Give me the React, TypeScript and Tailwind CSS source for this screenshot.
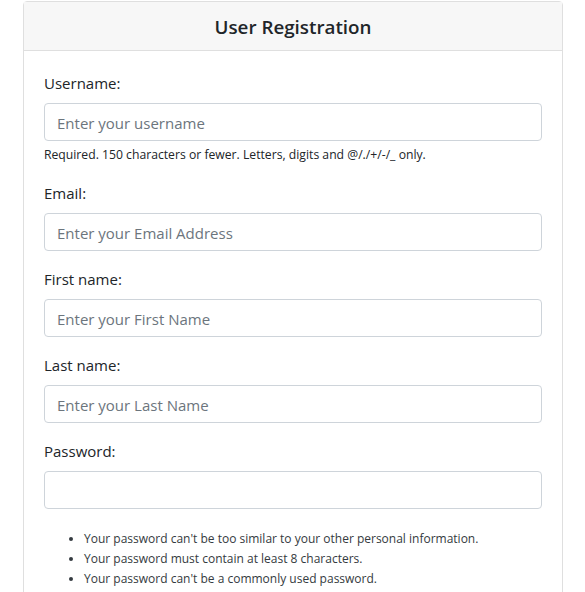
const fields = [
  { id: "username", label: "Username:", placeholder: "Enter your username", help: "Required. 150 characters or fewer. Letters, digits and @/./+/-/_ only." },
  { id: "email", label: "Email:", placeholder: "Enter your Email Address" },
  { id: "first_name", label: "First name:", placeholder: "Enter your First Name" },
  { id: "last_name", label: "Last name:", placeholder: "Enter your Last Name" },
];

const passwordRules = [
  "Your password can't be too similar to your other personal information.",
  "Your password must contain at least 8 characters.",
  "Your password can't be a commonly used password.",
];

export default function App() {
  return (
    <div className="min-h-[592px] bg-white pt-[1px] font-['Open_Sans',sans-serif] text-[#212529]">
      <div className="ml-[23px] w-[540px] rounded-t-[4px] border border-[#dfdfdf]">
        <div className="h-[49px] pt-[3px] border-b border-[#dfdfdf] bg-[#f7f7f7] flex items-center justify-center">
          <h4 className="text-[18.8px] font-semibold leading-none">User Registration</h4>
        </div>
        <form className="p-5">
          {fields.map((f) => (
            <div key={f.id} className="mb-4">
              <label htmlFor={f.id} className="block mb-2 text-[15px] leading-6">
                {f.label}
              </label>
              <input
                id={f.id}
                type="text"
                placeholder={f.placeholder}
                className="block w-full h-[38px] rounded-[4px] border border-[#ced4da] px-3 pt-[2px] text-[15px] placeholder:text-[#6c757d] outline-none"
              />
              {f.help && (
                <small className="block mt-1 text-[12.2px] leading-[19.5px]">{f.help}</small>
              )}
            </div>
          ))}
          <div>
            <label htmlFor="password" className="block mb-2 text-[15px] leading-6">
              Password:
            </label>
            <input
              id="password"
              type="password"
              className="block w-full h-[38px] rounded-[4px] border border-[#ced4da] px-3 text-[15px] outline-none"
            />
            <ul className="mt-[20px] pl-10 list-disc text-[12px] leading-[20px] text-[#343a40]">
              {passwordRules.map((r) => (
                <li key={r}>{r}</li>
              ))}
            </ul>
          </div>
        </form>
      </div>
    </div>
  );
}
